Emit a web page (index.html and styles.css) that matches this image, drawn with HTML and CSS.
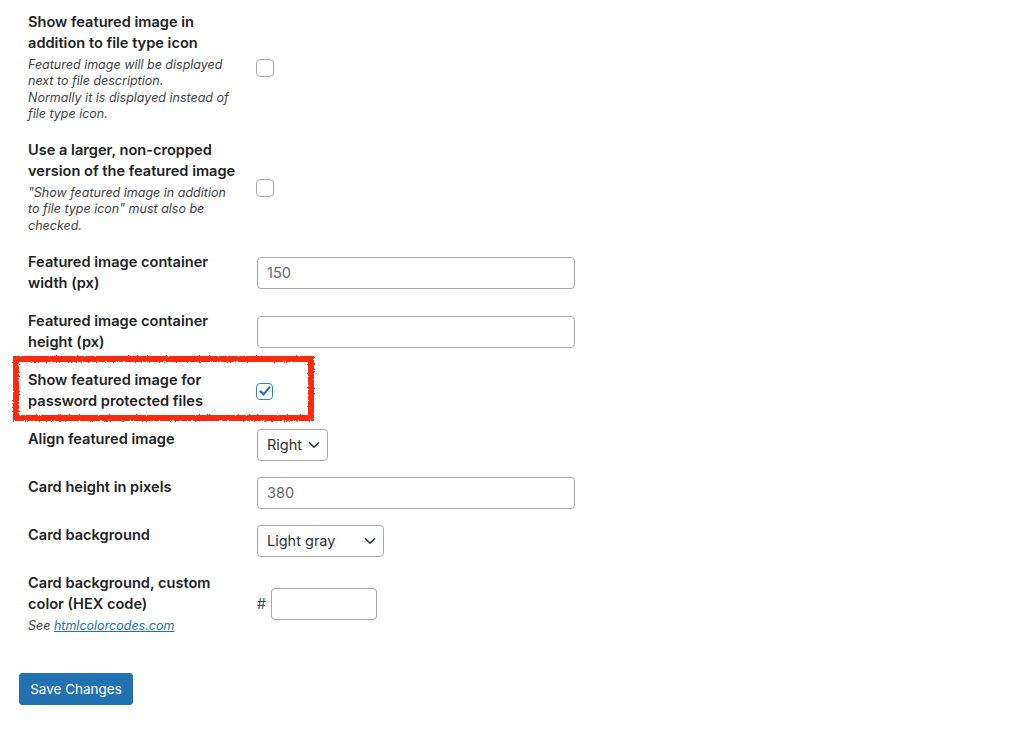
FILE: index.html
```html
<!DOCTYPE html>
<html lang="en">
<head>
<meta charset="utf-8">
<title>Settings</title>
<link rel="stylesheet" href="styles.css">
</head>
<body>
<svg class="defs" width="0" height="0" aria-hidden="true">
  <filter id="rough" x="-5%" y="-10%" width="110%" height="120%">
    <feTurbulence type="fractalNoise" baseFrequency="0.9" numOctaves="2" seed="3" result="noise"/>
    <feDisplacementMap in="SourceGraphic" in2="noise" scale="3" xChannelSelector="R" yChannelSelector="G"/>
  </filter>
</svg>
<div class="wrap">
  <div class="rows">
    <div class="row">
      <div class="th">
        <div class="label">Show featured image in addition to file type icon</div>
        <div class="desc">Featured image will be displayed next to file description.<br>Normally it is displayed instead of file type icon.</div>
      </div>
      <div class="td"><span class="checkbox"></span></div>
    </div>
    <div class="row">
      <div class="th">
        <div class="label">Use a larger, non-cropped version of the featured image</div>
        <div class="desc">"Show featured image in addition to file type icon" must also be checked.</div>
      </div>
      <div class="td"><span class="checkbox"></span></div>
    </div>
    <div class="row">
      <div class="th"><div class="label">Featured image container width (px)</div></div>
      <div class="td"><div class="input wide">150</div></div>
    </div>
    <div class="row">
      <div class="th"><div class="label">Featured image container height (px)</div></div>
      <div class="td"><div class="input wide"></div></div>
    </div>
    <div class="row highlight">
      <div class="th"><div class="label">Show featured image for password protected files</div></div>
      <div class="td">
        <span class="checkbox checked">
          <svg viewBox="0 0 18 18" width="18" height="18"><path d="M4.4 9.3 L7.6 12.4 L13.6 5.4" fill="none" stroke="#2271b1" stroke-width="2.2" stroke-linecap="round" stroke-linejoin="round"/></svg>
        </span>
      </div>
      <div class="marker"></div>
    </div>
    <div class="row">
      <div class="th"><div class="label">Align featured image</div></div>
      <div class="td">
        <div class="select sel-right"><span>Right</span>
          <svg viewBox="0 0 12 8" width="12" height="8"><path d="M1.5 1.8 L6 6.2 L10.5 1.8" fill="none" stroke="#2c3338" stroke-width="1.6" stroke-linecap="round" stroke-linejoin="round"/></svg>
        </div>
      </div>
    </div>
    <div class="row">
      <div class="th"><div class="label">Card height in pixels</div></div>
      <div class="td"><div class="input wide">380</div></div>
    </div>
    <div class="row">
      <div class="th"><div class="label">Card background</div></div>
      <div class="td">
        <div class="select sel-bg"><span>Light gray</span>
          <svg viewBox="0 0 12 8" width="12" height="8"><path d="M1.5 1.8 L6 6.2 L10.5 1.8" fill="none" stroke="#2c3338" stroke-width="1.6" stroke-linecap="round" stroke-linejoin="round"/></svg>
        </div>
      </div>
    </div>
    <div class="row">
      <div class="th">
        <div class="label">Card background, custom color (HEX code)</div>
        <div class="desc">See <a href="#">htmlcolorcodes.com</a></div>
      </div>
      <div class="td hex"><span class="hash">#</span><div class="input short"></div></div>
    </div>
  </div>
  <div class="submit"><button class="button-primary" type="button">Save Changes</button></div>
</div>
</body>
</html>
```

FILE: styles.css
```css
html, body {
  margin: 0;
  padding: 0;
  background: #ffffff;
}
body {
  font-family: Inter, "Liberation Sans", sans-serif;
  color: #1d2327;
}
.defs {
  position: absolute;
  width: 0;
  height: 0;
  overflow: hidden;
}
.wrap {
  padding: 3.5px 19px 0 19px;
}
.rows {
  display: flex;
  flex-direction: column;
}
.row {
  display: grid;
  grid-template-columns: 229px 1fr;
  padding-left: 9px;
  position: relative;
}
.th {
  padding: 8px 19px 9px 0;
  align-self: start;
}
.label {
  font-size: 14.6px;
  font-weight: 600;
  line-height: 21px;
  color: #1d2327;
}
.desc {
  margin-top: 3px;
  font-size: 12.5px;
  font-style: italic;
  line-height: 16.6px;
  color: #3c434a;
}
.desc a {
  color: #2271b1;
  text-decoration: underline;
}
.td {
  padding: 8px 0;
  align-self: center;
  display: flex;
  align-items: center;
}
.checkbox {
  width: 16px;
  height: 16px;
  border: 1px solid #a7aaad;
  border-radius: 4px;
  box-sizing: content-box;
  margin-left: -1px;
  position: relative;
  display: block;
}
.checkbox.checked {
  width: 15px;
  height: 15px;
  border: 1.5px solid #3582c4;
}
.checkbox.checked svg {
  position: absolute;
  left: -1.5px;
  top: -1.5px;
}
.input {
  box-sizing: border-box;
  height: 32px;
  border: 1px solid #a7aaad;
  border-radius: 4px;
  padding: 0 9px;
  font-size: 14.5px;
  line-height: 30px;
  color: #646970;
  background: #fff;
}
.input.wide {
  width: 318px;
}
.input.short {
  width: 106px;
}
.hash {
  font-size: 14px;
  color: #3c434a;
  width: 14px;
}
.select {
  box-sizing: border-box;
  height: 32px;
  border: 1px solid #a7aaad;
  border-radius: 4px;
  padding: 0 7px 0 9px;
  display: flex;
  align-items: center;
  justify-content: space-between;
  font-size: 14.5px;
  color: #2c3338;
  background: #fff;
}
.sel-right { width: 71px; }
.sel-bg { width: 127px; }
.marker {
  position: absolute;
  left: -6px;
  top: -5.5px;
  width: 301px;
  height: 65px;
  box-sizing: border-box;
  border: 6px solid #ff2a0c;
  filter: url(#rough);
  pointer-events: none;
}
.submit {
  padding-top: 30px;
}
.button-primary {
  box-sizing: border-box;
  width: 114px;
  height: 32px;
  background: #2271b1;
  border: 1px solid #2271b1;
  border-radius: 3px;
  color: #fff;
  font-family: Inter, "Liberation Sans", sans-serif;
  font-size: 13.5px;
  padding: 0;
  cursor: pointer;
}
```
